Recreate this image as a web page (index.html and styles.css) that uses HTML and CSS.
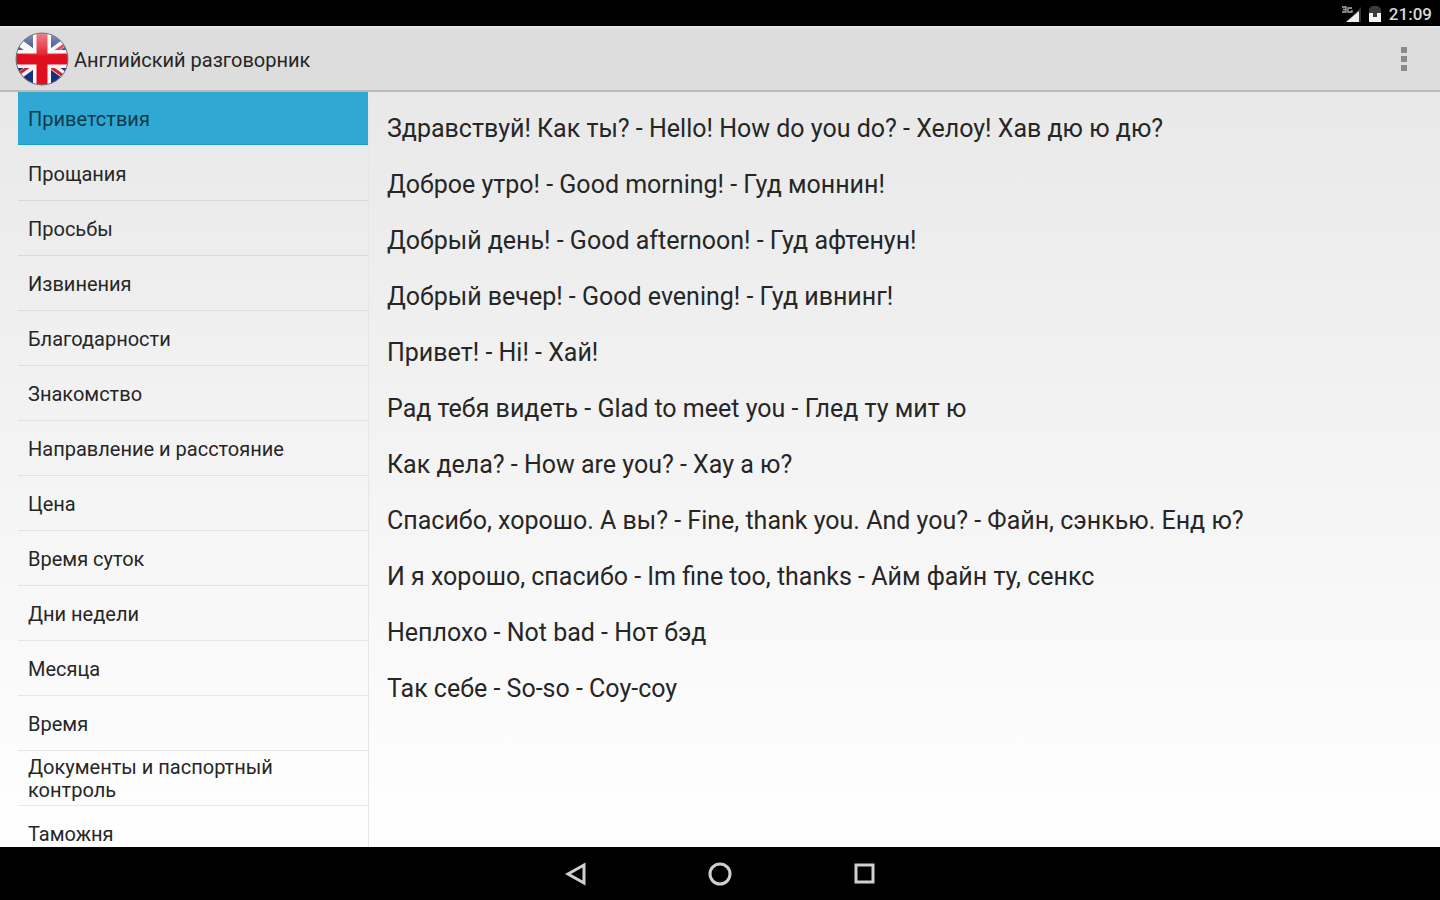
FILE: index.html
```html
<!DOCTYPE html>
<html lang="ru">
<head>
<meta charset="utf-8">
<title>Английский разговорник</title>
<meta name="viewport" content="width=device-width, initial-scale=1">
<link rel="stylesheet" href="styles.css">
</head>
<body>
<div class="screen">
  <div class="status">
    <svg class="signal" width="20" height="18" viewBox="0 0 20 18" aria-label="3G"><path d="M1 2h4v5H1M2 4.500h3M11 3H7v4h4V5" fill="none" stroke="#aaa" stroke-width="1.300"/><path d="M20 2v15H5z" fill="#333"/><path d="M18 6v11H5l6-5z" fill="#eee"/></svg>
    <svg class="battery" width="12" height="18" viewBox="0 0 12 18" aria-hidden="true"><path d="M0 4l3-3h6l3 3v13H0z" fill="#3c3c3c"/><path d="M0 8h4v4h4V8h4v9H0z" fill="#f4f4f4"/></svg>
    <span class="clock">21:09</span>
  </div>
  <header class="bar">
    <svg class="flag" width="54" height="54" viewBox="0 0 54 54" aria-hidden="true">
      <defs>
        <clipPath id="disc"><circle cx="27" cy="27" r="26"/></clipPath>
        <linearGradient id="gloss" x1="0" y1="0" x2="0" y2="1"><stop offset="0" stop-color="#fff" stop-opacity=".5"/><stop offset="1" stop-color="#fff" stop-opacity=".08"/></linearGradient>
      </defs>
      <g clip-path="url(#disc)">
        <path d="M0 0h54v54H0z" fill="#1c2f7c"/>
        <path d="M-6 3L60 51M60 3L-6 51" stroke="#f6f6f8" stroke-width="7"/>
        <path d="M60 5L27 29M-6 49L27 25M27 29L60 52" stroke="#d8202c" stroke-width="3"/>
        <path d="M27 0v54M0 27h54" stroke="#f8f8fa" stroke-width="18"/>
        <path d="M27 0v54M0 27h54" stroke="#df0f20" stroke-width="11"/>
        <path d="M0 0h54v21Q27 26 0 21z" fill="url(#gloss)"/>
      </g>
      <circle cx="27" cy="27" r="26" fill="none" stroke="#77777c" stroke-width="1"/>
    </svg>
    <h1 class="title">Английский разговорник</h1>
    <button class="more" type="button" aria-label="Ещё"><svg width="8" height="26" viewBox="0 0 8 26"><path d="M1 1h6v6H1zM1 10h6v6H1zM1 19h6v6H1z" fill="#8a8a8a"/></svg></button>
  </header>
  <div class="content">
    <nav class="topics">
      <button class="topic active" type="button">Приветствия</button>
      <button class="topic" type="button">Прощания</button>
      <button class="topic" type="button">Просьбы</button>
      <button class="topic" type="button">Извинения</button>
      <button class="topic" type="button">Благодарности</button>
      <button class="topic" type="button">Знакомство</button>
      <button class="topic" type="button">Направление и расстояние</button>
      <button class="topic" type="button">Цена</button>
      <button class="topic" type="button">Время суток</button>
      <button class="topic" type="button">Дни недели</button>
      <button class="topic" type="button">Месяца</button>
      <button class="topic" type="button">Время</button>
      <button class="topic" type="button">Документы и паспортный контроль</button>
      <button class="topic" type="button">Таможня</button>
    </nav>
    <main class="phrases">
      <p>Здравствуй! Как ты? - Hello! How do you do? - Хелоу! Хав дю ю дю?</p>
      <p>Доброе утро! - Good morning! - Гуд моннин!</p>
      <p>Добрый день! - Good afternoon! - Гуд афтенун!</p>
      <p>Добрый вечер! - Good evening! - Гуд ивнинг!</p>
      <p>Привет! - Hi! - Хай!</p>
      <p>Рад тебя видеть - Glad to meet you - Глед ту мит ю</p>
      <p>Как дела? - How are you? - Хау а ю?</p>
      <p>Спасибо, хорошо. А вы? - Fine, thank you. And you? - Файн, сэнкью. Енд ю?</p>
      <p>И я хорошо, спасибо - Im fine too, thanks - Айм файн ту, сенкс</p>
      <p>Неплохо - Not bad - Нот бэд</p>
      <p>Так себе - So-so - Соу-соу</p>
    </main>
  </div>
  <footer class="system">
    <button type="button" aria-label="Назад"><svg width="24" height="24" viewBox="0 0 24 24"><path d="M20 3v18L4 12z"/></svg></button>
    <button type="button" aria-label="Домой"><svg width="24" height="24" viewBox="0 0 24 24"><circle cx="12" cy="12" r="10"/></svg></button>
    <button type="button" aria-label="Обзор"><svg width="24" height="24" viewBox="0 0 24 24"><path d="M4 3h17v17H4z"/></svg></button>
  </footer>
</div>
</body>
</html>
```
FILE: styles.css
```css
* { box-sizing: border-box; }
body { margin: 0; font-family: Roboto, "Noto Sans", sans-serif; color: #262626; }
button { font: inherit; color: inherit; border: 0; padding: 0; background: none; }
svg { display: block; }
.screen {
  height: 100vh;
  display: flex;
  flex-direction: column;
  background: linear-gradient(#e6e6e6, #fff 94%);
}
.status {
  height: 26px;
  flex: none;
  display: flex;
  align-items: center;
  justify-content: flex-end;
  gap: 8px;
  padding: 2px 8px 0 0;
  background: #000;
  color: #d8d8d8;
}
.clock { font-size: 17px; line-height: 20px; font-weight: 500; }
.bar {
  height: 66px;
  flex: none;
  display: flex;
  align-items: center;
  gap: 5px;
  padding: 0 24px 0 15px;
  background: #ddd;
  border-top: 2px solid #e8e8e8;
  border-bottom: 2px solid #bbb;
}
.title { flex: 1; margin: 0; padding-top: 2px; font-size: 20px; line-height: 24px; font-weight: 400; }
.more { padding: 0 8px; }
.content { flex: 1; min-height: 0; display: flex; }
.topics {
  width: 351px;
  flex: none;
  margin-left: 18px;
  overflow: hidden;
  border-right: 1px solid #e6e6e6;
}
.topic {
  display: block;
  width: 100%;
  height: 55px;
  padding: 2px 70px 0 10px;
  border-bottom: 1px solid rgba(0, 0, 0, .08);
  text-align: left;
  font-size: 20px;
  line-height: 23px;
}
.topic.active {
  height: 53px;
  margin-bottom: 1px;
  background: #2fa9d4;
  border-bottom-color: #12a0cf;
  color: #12394a;
}
.phrases { flex: 1; padding: 9px 18px; }
.phrases p { margin: 0; padding: 14px 0; font-size: 25px; line-height: 28px; }
.system {
  height: 53px;
  flex: none;
  display: flex;
  align-items: center;
  justify-content: center;
  gap: 120px;
  background: #000;
}
.system svg { fill: none; stroke: #d0d0d0; stroke-width: 3; }
```
